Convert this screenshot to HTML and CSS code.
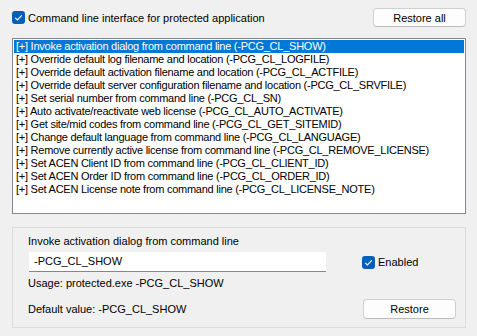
FILE: index.html
```html
<!DOCTYPE html>
<html lang="en">
<head>
    <meta charset="UTF-8">
    <title>Command line options</title>
    <link rel="stylesheet" href="styles.css">
</head>
<body>
    <div class="dialog">
        <div class="top-row">
            <label class="check">
                <span class="box"><svg viewBox="0 0 13 13" width="13" height="13"><path d="M3.2 6.8 L5.4 9 L9.8 4.3" fill="none" stroke="#fff" stroke-width="1.1"/></svg></span>
                Command line interface for protected application
            </label>
            <button class="btn restore-all">Restore all</button>
        </div>

        <ul class="option-list">
            <li class="selected">[+] Invoke activation dialog from command line (-PCG_CL_SHOW)</li>
            <li>[+] Override default log filename and location (-PCG_CL_LOGFILE)</li>
            <li>[+] Override default activation filename and location (-PCG_CL_ACTFILE)</li>
            <li>[+] Override default server configuration filename and location (-PCG_CL_SRVFILE)</li>
            <li>[+] Set serial number from command line (-PCG_CL_SN)</li>
            <li>[+] Auto activate/reactivate web license (-PCG_CL_AUTO_ACTIVATE)</li>
            <li>[+] Get site/mid codes from command line (-PCG_CL_GET_SITEMID)</li>
            <li>[+] Change default language from command line (-PCG_CL_LANGUAGE)</li>
            <li>[+] Remove currently active license from command line (-PCG_CL_REMOVE_LICENSE)</li>
            <li>[+] Set ACEN Client ID from command line (-PCG_CL_CLIENT_ID)</li>
            <li>[+] Set ACEN Order ID from command line (-PCG_CL_ORDER_ID)</li>
            <li>[+] Set ACEN License note from command line (-PCG_CL_LICENSE_NOTE)</li>
        </ul>

        <div class="details">
            <div class="title">Invoke activation dialog from command line</div>
            <div class="field-row">
                <div class="field">-PCG_CL_SHOW</div>
                <label class="check">
                    <span class="box"><svg viewBox="0 0 13 13" width="13" height="13"><path d="M3.2 6.8 L5.4 9 L9.8 4.3" fill="none" stroke="#fff" stroke-width="1.1"/></svg></span>
                    Enabled
                </label>
            </div>
            <div class="usage">Usage: protected.exe -PCG_CL_SHOW</div>
            <div class="default-row">
                <span>Default value: -PCG_CL_SHOW</span>
                <button class="btn restore">Restore</button>
            </div>
        </div>
    </div>
</body>
</html>
```

FILE: styles.css
```css
body {
    margin: 0;
    background-color: #f0f0f0;
    font-family: "Liberation Sans", Arial, sans-serif;
    font-size: 11px;
    color: #000;
}
.dialog {
    padding: 8px 11px 0 12px;
}
.top-row {
    display: flex;
    justify-content: space-between;
    align-items: center;
    height: 19px;
}
.check {
    display: flex;
    align-items: center;
    gap: 3px;
}
.box {
    width: 13px;
    height: 13px;
    background-color: #005fb8;
    border-radius: 3px;
    display: block;
}
.box svg {
    display: block;
}
.btn {
    font-family: inherit;
    font-size: 11px;
    background-color: #fdfdfd;
    border: 1px solid #d0d0d0;
    border-bottom-color: #bcbcbc;
    border-radius: 4px;
    color: #000;
    padding: 0;
}
.restore-all {
    width: 93px;
    height: 19px;
}
.option-list {
    list-style: none;
    margin: 11px 0 0 0;
    padding: 1px;
    height: 172px;
    background-color: #fff;
    border: 1px solid #828790;
    font-size: 11px;
    letter-spacing: -0.25px;
}
.option-list li {
    line-height: 13px;
    height: 13px;
    padding-left: 2px;
    white-space: nowrap;
}
.option-list li.selected {
    background-color: #0078d7;
    color: #fff;
}
.details {
    margin-top: 13px;
    border: 1px solid #dcdcdc;
    padding: 5px 9px 0 15px;
    box-sizing: border-box;
    height: 101px;
}
.title {
    line-height: 16px;
}
.field-row {
    display: flex;
    align-items: center;
    margin-top: 3px;
}
.field {
    width: 292px;
    height: 19px;
    margin-left: 1px;
    padding-left: 5px;
    line-height: 19px;
    background-color: #fff;
    border-bottom: 1px solid #868686;
}
.field-row .check {
    margin-left: 36px;
}
.usage {
    margin-top: 3px;
    line-height: 16px;
}
.default-row {
    display: flex;
    justify-content: space-between;
    align-items: center;
    margin-top: 8px;
}
.restore {
    width: 93px;
    height: 20px;
}
```
